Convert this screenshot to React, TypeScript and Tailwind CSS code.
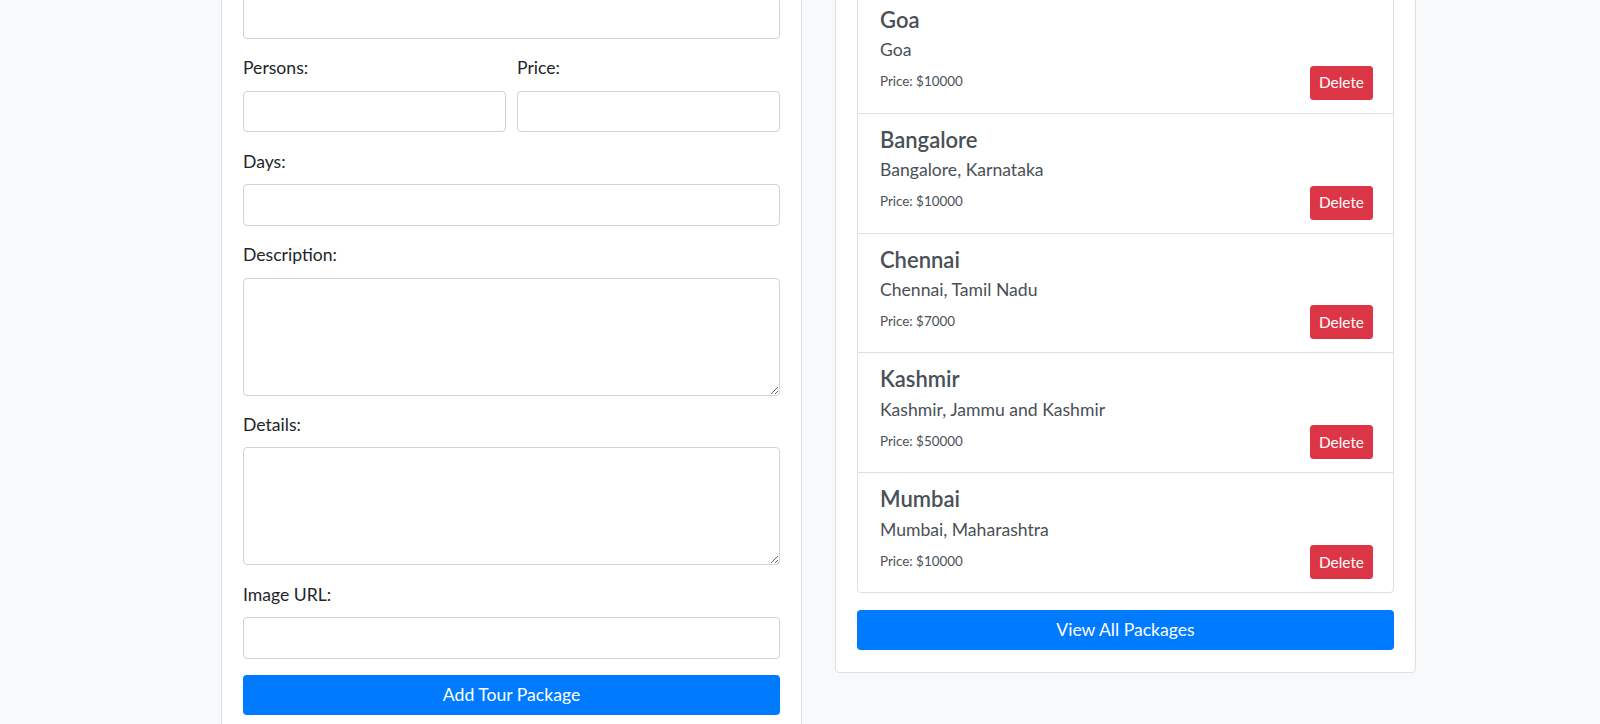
const PACKAGES = [
  { id: 1, name: 'Goa', location: 'Goa', price: 10000 },
  { id: 2, name: 'Bangalore', location: 'Bangalore, Karnataka', price: 10000 },
  { id: 3, name: 'Chennai', location: 'Chennai, Tamil Nadu', price: 7000 },
  { id: 4, name: 'Kashmir', location: 'Kashmir, Jammu and Kashmir', price: 50000 },
  { id: 5, name: 'Mumbai', location: 'Mumbai, Maharashtra', price: 10000 },
]

const input = 'block w-full h-[41.8px] px-[13px] rounded-[4px] border border-[#ced4da] bg-white text-[17.6px] text-[#495057] outline-none'
const area = 'block w-full h-[118px] px-[13px] py-[7px] rounded-[4px] border border-[#ced4da] bg-white text-[17.6px] text-[#495057] outline-none'
const label = 'block mb-[8.8px] text-[17.6px] leading-[26.4px] text-[#212529]'

function Field({ name, rows }: { name?: string; rows?: number }) {
  return (
    <div className="mb-[16.5px]">
      {name && <label className={label}>{name}</label>}
      {rows ? <textarea rows={rows} className={area} /> : <input type="text" className={input} />}
    </div>
  )
}

export default function App() {
  return (
    <div className="h-[724px] overflow-hidden bg-[#f8f9fa] font-['Segoe_UI',Lato,sans-serif]">
      <div className="flex items-start gap-[33px] pl-[221px]">
        {/* Add package form (scrolled: the top fields sit above the view) */}
        <div className="w-[581px] mt-[-26px] bg-white border border-[#dfdfdf] rounded-[4px] px-[21px] py-[22px]">
          <Field />
          <div className="flex gap-[11px]">
            <div className="flex-1">
              <Field name="Persons:" />
            </div>
            <div className="flex-1">
              <Field name="Price:" />
            </div>
          </div>
          <Field name="Days:" />
          <Field name="Description:" rows={4} />
          <Field name="Details:" rows={4} />
          <Field name="Image URL:" />
          <button className="w-full h-[40px] rounded-[4px] bg-[#007bff] text-white text-[17.6px] leading-[26.4px]">
            Add Tour Package
          </button>
          <div className="h-[40px]" />
        </div>

        {/* Package list */}
        <div className="w-[581px] mt-[-30px] bg-white border border-[#dfdfdf] rounded-[4px] px-[21px] py-[22px]">
          <div className="border border-[#dfdfdf] rounded-[4px] divide-y divide-[#dfdfdf]">
            {PACKAGES.map(p => (
              <div key={p.id} className="pl-[22px] pr-[20px] pt-[13px] pb-[13px] text-[#495057]">
                <h5 className="text-[22px] font-semibold leading-[26.4px] mb-[4px]">{p.name}</h5>
                <p className="text-[17.6px] leading-[26.4px] mb-[2px]">{p.location}</p>
                <div className="flex items-center justify-between h-[34px]">
                  <small className="text-[13.4px] mb-[3px]">Price: ${p.price}</small>
                  <button className="h-[34px] px-[9px] rounded-[3.5px] bg-[#dc3545] text-white text-[15.4px]">
                    Delete
                  </button>
                </div>
              </div>
            ))}
          </div>
          <button className="mt-[17px] w-full h-[40px] rounded-[4px] bg-[#007bff] text-white text-[17.6px] leading-[26.4px]">
            View All Packages
          </button>
        </div>
      </div>
    </div>
  )
}
